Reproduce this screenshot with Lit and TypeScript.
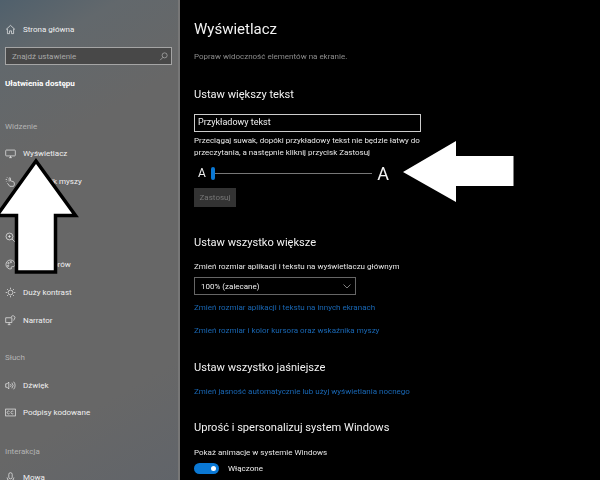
import { LitElement, html, css, svg } from "lit";
import { customElement } from "lit/decorators.js";

const ic = (body: unknown) => html`<svg class="ic" viewBox="0 0 16 16" fill="none" stroke="currentColor" stroke-width="1">${body}</svg>`;
const icons: Record<string, unknown> = {
  home: svg`<path d="M1.5 8 8 2l6.5 6M3.5 7v7h3v-4h3v4h3V7"/>`,
  display: svg`<rect x="1" y="3" width="14" height="8.5" rx="1"/><path d="M6 14h4M8 11.5V14"/>`,
  pointer: svg`<path d="M6 8V3.5a1 1 0 0 1 2 0V7l4 1.2c1 .4 1.5 1 1.5 2V13l-1 2H7L3.5 10.5M3 2l1 1M1 5h2M2 8l1-1"/>`,
  cursor: svg`<path d="M2 2v11l3-3 2 5 2-1-2-5h4z"/>`,
  zoom: svg`<circle cx="6.5" cy="6.5" r="5"/><path d="M10 10l5 5M4.500 6.500h4M6.500 4.500v4"/>`,
  palette: svg`<path d="M8 1.500a6.500 6.500 0 1 0 1 12.900c1-.6-.6-2.400.6-3.100 1.400-.7 4.900.7 4.900-2.800A7 7 0 0 0 8 1.500z"/><circle cx="5" cy="6" r="1"/><circle cx="8.500" cy="4.500" r="1"/><circle cx="4.500" cy="10" r="1"/>`,
  contrast: svg`<circle cx="8" cy="8" r="3.500"/><path d="M8 1v2M8 13v2M1 8h2M13 8h2M3 3l1.500 1.500M11.500 11.500 13 13M3 13l1.500-1.500M11.500 4.500 13 3"/>`,
  narrator: svg`<path d="M1 4h9v7H1zM4 14h4M6 11v3M9 2.500a3 3 0 0 1 5.500 1.500c0 2-2 2-2 4"/>`,
  sound: svg`<path d="M5.500 3v10L3 10.500H1v-5h2zM8 6a3 3 0 0 1 0 4M10 4a6 6 0 0 1 0 8M12.500 2.500a8 8 0 0 1 0 11"/>`,
  captions: svg`<rect x="1" y="3" width="14" height="10"/><path d="M6.500 6.500a2 2 0 1 0 0 3M12 6.500a2 2 0 1 0 0 3"/>`,
  mic: svg`<rect x="5.500" y="1" width="5" height="9" rx="2.500"/><path d="M3 8a5 5 0 0 0 10 0M8 13v2"/>`,
};

type Row = { icon: string; label: string };
const vision: Row[] = [
  { icon: "display", label: "Wyświetlacz" },
  { icon: "pointer", label: "Wskaźnik myszy" },
  { icon: "cursor", label: "Kursor" },
  { icon: "zoom", label: "Lupa" },
  { icon: "palette", label: "Filtry kolorów" },
  { icon: "contrast", label: "Duży kontrast" },
  { icon: "narrator", label: "Narrator" },
];
const hearing: Row[] = [
  { icon: "sound", label: "Dźwięk" },
  { icon: "captions", label: "Podpisy kodowane" },
];

@customElement("app-root")
export class AppRoot extends LitElement {
  static styles = css`
    :host { display: block; width: 600px; height: 480px; overflow: hidden; position: relative; background: #000;
      font-family: Roboto, "Open Sans", sans-serif; }
    .shell { display: flex; height: 480px; filter: blur(0.35px); overflow: hidden; }
    .side { width: 178px; flex: none; border-right: 2px solid #777; height: 480px; overflow: hidden; color: #eee;
      background: linear-gradient(150deg, #50606c 0, #62686c 60px, #676767 150px, #676767 400px, #60646a 520px, #596066 640px); }
    .ic { width: 11px; height: 11px; flex: none; }
    .row { display: flex; align-items: center; gap: 7px; height: 27.75px; padding-left: 5px; font-size: 8px; color: #f0f0f0; white-space: nowrap; }
    .home { margin-top: 15.250px; }
    .search { margin: 4px 6px 0 5px; height: 18px; box-sizing: border-box; border: 1px solid #a5a5a5; background: #484848;
      display: flex; align-items: center; justify-content: space-between; padding: 0 3px 0 6px; color: #a8a8a8; font-size: 8px; }
    .search .ic { width: 9px; height: 9px; color: #ccc; }
    .sect { font-size: 8.100px; font-weight: 700; margin: 10.500px 0 0 5px; height: 14px; line-height: 14px; color: #fff; }
    .group { font-size: 8px; color: #b4b4b4; padding-left: 5px; height: 14px; line-height: 14px; }
    .g1 { margin-top: 30px; margin-bottom: 6.500px; }
    .g2 { margin-top: 17px; margin-bottom: 6px; }
    .g3 { margin-top: 18px; margin-bottom: 5px; }
    .main { flex: 1; padding-left: 14px; color: #eee; font-size: 8px; overflow: hidden; }
    h1 { font-size: 15px; font-weight: 400; margin: 18px 0 0; height: 22px; line-height: 22px; color: #f2f2f2; }
    h2 { font-size: 11.100px; font-weight: 400; margin: 0; height: 18px; line-height: 18px; color: #f2f2f2; white-space: nowrap; }
    p { margin: 0; line-height: 12px; white-space: nowrap; }
    .intro { margin-top: 11px; color: #8c8c8c; }
    .h-a { margin-top: 23px; }
    .input { margin-top: 10px; width: 227px; height: 18px; box-sizing: border-box; border: 1px solid #ccc; padding-left: 3px; line-height: 15.500px; font-size: 9px; color: #eee; }
    .hint { margin-top: 3px; color: #e6e6e6; }
    .slider { display: flex; align-items: center; margin-top: 4px; height: 20px; width: 195px; }
    .small { width: 15px; padding-left: 4px; box-sizing: border-box; font-size: 12px; flex: none; }
    .track { flex: 1; height: 1px; background: #777; position: relative; margin-left: 2px; }
    .thumb { position: absolute; left: 0; top: -6px; width: 4px; height: 13px; border-radius: 2px; background: #0a78d4; }
    .big { font-size: 18px; margin-left: 5px; flex: none; color: #f2f2f2; }
    .apply { margin-top: 5px; width: 42px; height: 19px; background: #333; color: #777; display: flex; align-items: center; justify-content: center; }
    .h-b { margin-top: 27px; }
    .label { margin-top: 9px; color: #e6e6e6; }
    .select { margin-top: 4px; width: 162px; height: 18px; box-sizing: border-box; border: 1px solid #666; display: flex; align-items: center; justify-content: space-between; padding: 0 4px 0 6px; color: #eee; }
    .select svg { width: 8px; height: 8px; color: #aaa; }
    .link { color: #1967b4; }
    .l1 { margin-top: 7px; }
    .l2 { margin-top: 10.500px; }
    .h-c { margin-top: 22px; }
    .l3 { margin-top: 9px; }
    .h-d { margin-top: 21px; }
    .label2 { margin-top: 10px; color: #e6e6e6; }
    .toggle { display: flex; align-items: center; gap: 9px; margin-top: 4px; }
    .sw { width: 25px; height: 11px; border-radius: 6px; background: #0a78d4; display: flex; justify-content: flex-end; align-items: center; padding-right: 3px; box-sizing: border-box; }
    .sw i { width: 5px; height: 5px; border-radius: 50%; background: #fff; display: block; }
    .arrows { position: absolute; inset: 0; width: 600px; height: 480px; pointer-events: none; }
  `;

  private row(r: Row) {
    return html`<div class="row">${ic(icons[r.icon])}<span>${r.label}</span></div>`;
  }

  render() {
    return html`
      <div class="shell">
        <nav class="side">
          <div class="row home">${ic(icons.home)}<span>Strona główna</span></div>
          <div class="search"><span>Znajdź ustawienie</span>
            ${ic(svg`<circle cx="10" cy="6" r="4.500"/><path d="M7 9.500 2 14.500"/>`)}</div>
          <div class="sect">Ułatwienia dostępu</div>
          <div class="group g1">Widzenie</div>
          ${vision.map((r) => this.row(r))}
          <div class="group g2">Słuch</div>
          ${hearing.map((r) => this.row(r))}
          <div class="group g3">Interakcja</div>
          ${this.row({ icon: "mic", label: "Mowa" })}
        </nav>
        <main class="main">
          <h1>Wyświetlacz</h1>
          <p class="intro">Popraw widoczność elementów na ekranie.</p>
          <h2 class="h-a">Ustaw większy tekst</h2>
          <div class="input">Przykładowy tekst</div>
          <p class="hint">Przeciągaj suwak, dopóki przykładowy tekst nie będzie łatwy do<br />przeczytania, a następnie kliknij przycisk Zastosuj</p>
          <div class="slider">
            <span class="small">A</span>
            <div class="track"><div class="thumb"></div></div>
            <span class="big">A</span>
          </div>
          <div class="apply">Zastosuj</div>
          <h2 class="h-b">Ustaw wszystko większe</h2>
          <p class="label">Zmień rozmiar aplikacji i tekstu na wyświetlaczu głównym</p>
          <div class="select"><span>100% (zalecane)</span>
            <svg viewBox="0 0 16 16" fill="none" stroke="currentColor" stroke-width="1.500"><path d="M1 5l7 7 7-7"/></svg></div>
          <p class="link l1">Zmień rozmiar aplikacji i tekstu na innych ekranach</p>
          <p class="link l2">Zmień rozmiar i kolor kursora oraz wskaźnika myszy</p>
          <h2 class="h-c">Ustaw wszystko jaśniejsze</h2>
          <p class="link l3">Zmień jasność automatycznie lub użyj wyświetlania nocnego</p>
          <h2 class="h-d">Uprość i spersonalizuj system Windows</h2>
          <p class="label2">Pokaż animacje w systemie Windows</p>
          <div class="toggle"><div class="sw"><i></i></div><span>Włączone</span></div>
        </main>
      </div>
      <svg class="arrows" viewBox="0 0 600 480">
        <path d="M36 161 75.500 215.500H55.500V272H16.500V215.500H-3Z" fill="#fff" stroke="#000" stroke-width="3.500" stroke-linejoin="miter"/>
        <path d="M403 172 456 141V156H513.500V186H456V202Z" fill="#fff"/>
      </svg>
    `;
  }
}
